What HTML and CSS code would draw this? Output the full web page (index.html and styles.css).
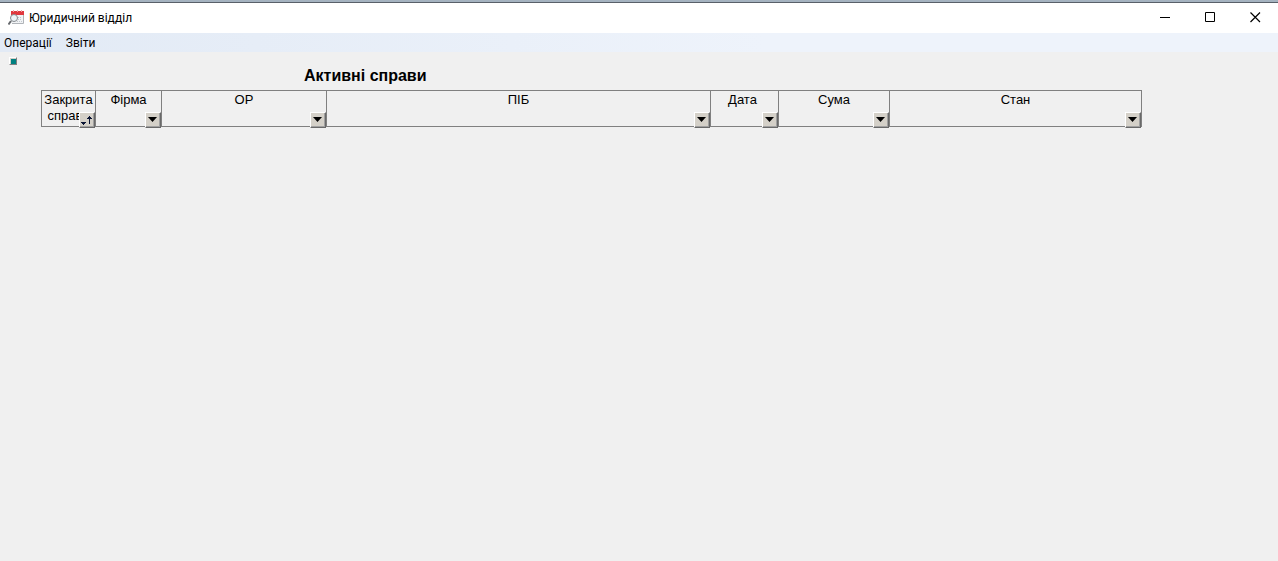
FILE: index.html
```html
<!DOCTYPE html>
<html lang="uk">
<head>
    <meta charset="UTF-8">
    <meta name="viewport" content="width=device-width, initial-scale=1.0">
    <title>Юридичний відділ</title>
    <link rel="stylesheet" href="styles.css">
</head>
<body>
    <header class="titlebar">
        <svg class="app-icon" width="16" height="16" viewBox="0 0 16 16" aria-hidden="true">
            <path d="M3 4h12v9H3z" fill="#f1f3f5"/>
            <path d="M4 13.500h11.500V4" fill="none" stroke="#b0b4b9"/>
            <path d="M3 1h13v4H3z" fill="#e0383e"/>
            <path d="M5.500 0v2M9.500 0v2M13.500 0v2" stroke="#f0a5a8"/>
            <path d="M10 7.500h4M10 9.500h4M9 11.500h5" stroke="#c3c8cf" stroke-dasharray="1 1"/>
            <path d="M3 11L.5 14.500" stroke="#66696d" stroke-width="2"/>
            <circle cx="6" cy="8" r="3.500" fill="#eef5f8" stroke="#85898e"/>
        </svg>
        <span class="caption">Юридичний відділ</span>
        <div class="window-buttons">
            <button type="button" aria-label="Згорнути">
                <svg width="11" height="11" viewBox="0 0 11 11"><path d="M0 5.500h10" stroke="#000"/></svg>
            </button>
            <button type="button" aria-label="Розгорнути">
                <svg width="11" height="11" viewBox="0 0 11 11"><path d="M.5.5h9v9h-9z" fill="none" stroke="#000"/></svg>
            </button>
            <button type="button" aria-label="Закрити">
                <svg width="11" height="11" viewBox="0 0 11 11"><path d="M.5.5l9.500 9.500M10 .5L.5 10" stroke="#000" stroke-width="1.200"/></svg>
            </button>
        </div>
    </header>

    <nav class="menubar">
        <button type="button">Операції</button>
        <button type="button">Звіти</button>
    </nav>

    <main class="workspace">
        <button type="button" class="marker" aria-label="Вибір"></button>
        <section class="cases">
            <h1>Активні справи</h1>
            <table>
                <colgroup>
                    <col class="col-closed">
                    <col class="col-firm">
                    <col class="col-account">
                    <col>
                    <col class="col-date">
                    <col class="col-sum">
                    <col class="col-state">
                </colgroup>
                <thead>
                    <tr>
                        <th scope="col">Закрита справа
                            <button type="button" class="filter" aria-label="Сортування">
                                <svg width="12" height="12" viewBox="0 0 12 12" fill="#0a1433"><path d="M0 8h5v1H4v1H3v1H2v-1H1V9H0z"/><path d="M8 2h1v1h1v1h1v1H9v5H8V5H6V4h1V3h1z"/></svg>
                            </button>
                        </th>
                        <th scope="col">Фірма
                            <button type="button" class="filter" aria-label="Фільтр: Фірма">
                                <svg width="12" height="12" viewBox="0 0 12 12"><path d="M1 3h9L5.500 8z"/></svg>
                            </button>
                        </th>
                        <th scope="col">ОР
                            <button type="button" class="filter" aria-label="Фільтр: ОР">
                                <svg width="12" height="12" viewBox="0 0 12 12"><path d="M1 3h9L5.500 8z"/></svg>
                            </button>
                        </th>
                        <th scope="col">ПІБ
                            <button type="button" class="filter" aria-label="Фільтр: ПІБ">
                                <svg width="12" height="12" viewBox="0 0 12 12"><path d="M1 3h9L5.500 8z"/></svg>
                            </button>
                        </th>
                        <th scope="col" class="date">Дата
                            <button type="button" class="filter" aria-label="Фільтр: Дата">
                                <svg width="12" height="12" viewBox="0 0 12 12"><path d="M1 3h9L5.500 8z"/></svg>
                            </button>
                        </th>
                        <th scope="col">Сума
                            <button type="button" class="filter" aria-label="Фільтр: Сума">
                                <svg width="12" height="12" viewBox="0 0 12 12"><path d="M1 3h9L5.500 8z"/></svg>
                            </button>
                        </th>
                        <th scope="col">Стан
                            <button type="button" class="filter" aria-label="Фільтр: Стан">
                                <svg width="12" height="12" viewBox="0 0 12 12"><path d="M1 3h9L5.500 8z"/></svg>
                            </button>
                        </th>
                    </tr>
                </thead>
            </table>
        </section>
    </main>
</body>
</html>
```

FILE: styles.css
```css
* {
    box-sizing: border-box;
}

body {
    margin: 0;
    min-height: 100vh;
    background: #f0f0f0;
    color: #000;
    font-family: Roboto, "Noto Sans", sans-serif;
    font-size: 12px;
}

button {
    padding: 0;
    border: 0;
    background: none;
    color: inherit;
    font: inherit;
}

svg {
    display: block;
}

/* Window title */
.titlebar {
    display: flex;
    align-items: center;
    height: 33px;
    padding-left: 8px;
    border-top: 2px solid #a5b3c0;
    box-shadow: inset 0 1px #596069;
    background: #fff;
}

.caption {
    margin-left: 5px;
}

.window-buttons {
    display: flex;
    align-self: stretch;
    margin-left: auto;
}

.window-buttons button {
    display: flex;
    align-items: center;
    justify-content: center;
    width: 45px;
}

/* Menu */
.menubar {
    display: flex;
    gap: 14px;
    height: 19px;
    padding: 0 4px;
    background: linear-gradient(to right, #e2eaf5, #eef3fb 60%);
}

/* Work area */
.workspace {
    display: flex;
    align-items: flex-start;
    gap: 24px;
    padding: 5px 136px 0 9px;
    font-family: "Liberation Sans", Arial, sans-serif;
}

.marker {
    width: 8px;
    height: 8px;
    border: 1px solid;
    border-color: #fff #808080 #808080 #fff;
    background: #008080;
    box-shadow: inset 1px 1px #d4d0c8;
}

.cases {
    flex: 1;
}

h1 {
    margin: 9px 0 5px 263px;
    font-size: 16px;
    line-height: 19px;
}

table {
    width: 100%;
    table-layout: fixed;
    border-spacing: 0;
    border-left: 1px solid #808080;
}

.col-closed {
    width: 54px;
}

.col-firm {
    width: 66px;
}

.col-account {
    width: 165px;
}

.col-date {
    width: 68px;
}

.col-sum {
    width: 111px;
}

.col-state {
    width: 252px;
}

th {
    position: relative;
    height: 37px;
    padding: 1px 0 0;
    border: 1px solid #808080;
    border-left: 0;
    font-size: 13px;
    font-weight: normal;
    line-height: 16px;
    vertical-align: top;
}

.date {
    padding-right: 4px;
}

/* Raised button in the corner of a heading */
.filter {
    position: absolute;
    right: 0;
    bottom: -2px;
    width: 16px;
    height: 16px;
    padding: 1px;
    border: 1px solid;
    border-color: #fff #696969 #696969 #fff;
    background: #d4d0c8;
    box-shadow: inset -1px -1px #a0a0a0;
}
```
